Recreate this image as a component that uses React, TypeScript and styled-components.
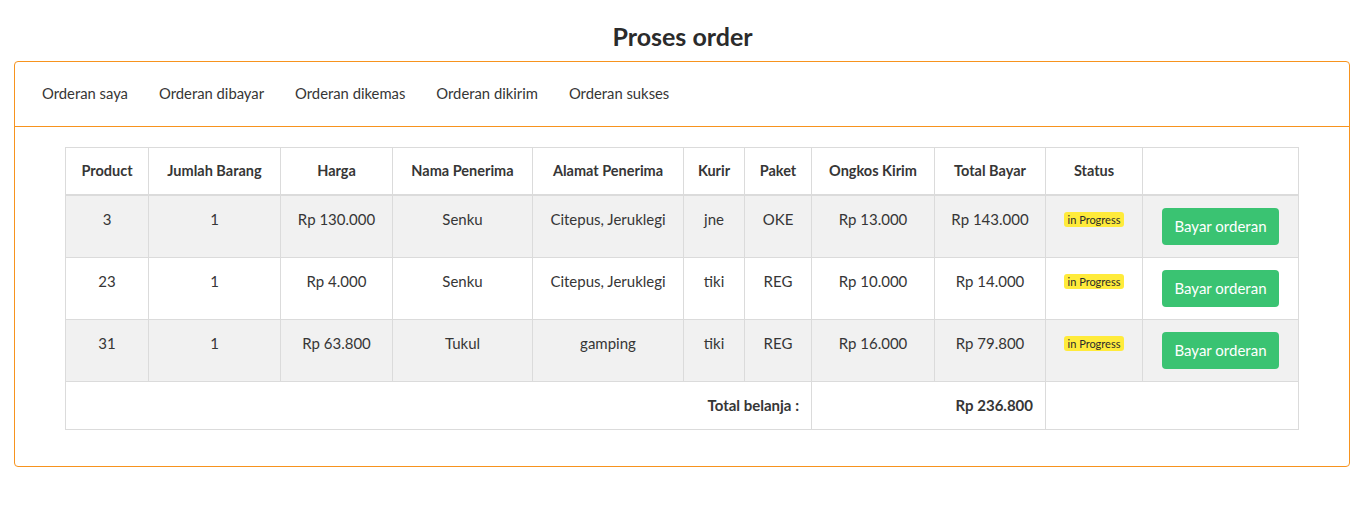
import React from 'react';
import styled, { createGlobalStyle } from 'styled-components';

const GlobalStyle = createGlobalStyle`
  html, body {
    margin: 0;
    padding: 0;
    background: #ffffff;
  }
  body {
    font-family: Lato, "Noto Sans", "Liberation Sans", sans-serif;
    color: #363636;
  }
`;

const Page = styled.div`
  padding: 20px 14px 0 14px;
`;

const Title = styled.h1`
  margin: 0 0 8px 0;
  text-align: center;
  font-size: 25px;
  font-weight: 700;
  line-height: 33px;
  color: #2b2b2b;
`;

const Card = styled.div`
  border: 1px solid #f7931e;
  border-radius: 4px;
  width: 1334px;
`;

const Tabs = styled.ul`
  display: flex;
  list-style: none;
  margin: 0;
  padding: 0 0 3px 11.5px;
  height: 61px;
  align-items: center;
  border-bottom: 1px solid #f7931e;
`;

const Tab = styled.li`
  padding: 0 15.5px;
  font-size: 14.8px;
  color: #363636;
  cursor: pointer;
`;

const Body = styled.div`
  padding: 20px 51px 36px 50px;
`;

const Table = styled.table`
  border-collapse: collapse;
  table-layout: fixed;
  width: 1233px;
  font-size: 15px;
  color: #363636;
`;

const Th = styled.th`
  border: 1px solid #dbdbdb;
  border-bottom-width: 2px;
  padding: 11px 6px 11px;
  line-height: 24px;
  font-weight: 700;
  font-size: 14.5px;
  text-align: center;
  vertical-align: top;
  color: #363636;
`;

const Row = styled.tr<{ $striped?: boolean }>`
  background: ${(p) => (p.$striped ? '#f1f1f1' : '#ffffff')};
`;

const Td = styled.td<{ $align?: string; $bold?: boolean }>`
  border: 1px solid #dbdbdb;
  padding: 11px 12px 12px;
  line-height: 24px;
  text-align: ${(p) => p.$align || 'center'};
  font-weight: ${(p) => (p.$bold ? 700 : 400)};
  vertical-align: top;
`;

const Tag = styled.span`
  display: inline-block;
  background: #ffeb3b;
  color: #2b2b2b;
  font-size: 11px;
  line-height: 15px;
  padding: 0 4px;
  border-radius: 3px;
  vertical-align: 1px;
`;

const Button = styled.button`
  display: block;
  margin: 0 auto;
  background: #3ac372;
  color: #ffffff;
  border: none;
  border-radius: 4px;
  font-family: inherit;
  font-size: 15px;
  height: 37px;
  width: 117px;
  padding: 0 0 2px;
  cursor: pointer;
`;

const BtnCell = styled(Td)`
  padding: 12px 0 12px;
`;

const colWidths = [83, 132, 112, 140, 151, 61, 67, 123, 111, 97, 156];
const headers = [
  'Product',
  'Jumlah Barang',
  'Harga',
  'Nama Penerima',
  'Alamat Penerima',
  'Kurir',
  'Paket',
  'Ongkos Kirim',
  'Total Bayar',
  'Status',
  '',
];

const orders = [
  { product: '3', qty: '1', harga: 'Rp 130.000', nama: 'Senku', alamat: 'Citepus, Jeruklegi', kurir: 'jne', paket: 'OKE', ongkir: 'Rp 13.000', total: 'Rp 143.000' },
  { product: '23', qty: '1', harga: 'Rp 4.000', nama: 'Senku', alamat: 'Citepus, Jeruklegi', kurir: 'tiki', paket: 'REG', ongkir: 'Rp 10.000', total: 'Rp 14.000' },
  { product: '31', qty: '1', harga: 'Rp 63.800', nama: 'Tukul', alamat: 'gamping', kurir: 'tiki', paket: 'REG', ongkir: 'Rp 16.000', total: 'Rp 79.800' },
];

const tabs = ['Orderan saya', 'Orderan dibayar', 'Orderan dikemas', 'Orderan dikirim', 'Orderan sukses'];

const App = () => {
  return (
    <>
      <GlobalStyle />
      <Page>
        <Title>Proses order</Title>
        <Card>
          <Tabs>
            {tabs.map((t) => (
              <Tab key={t}>{t}</Tab>
            ))}
          </Tabs>
          <Body>
            <Table>
              <colgroup>
                {colWidths.map((w, i) => (
                  <col key={i} style={{ width: w }} />
                ))}
              </colgroup>
              <thead>
                <tr>
                  {headers.map((h, i) => (
                    <Th key={i}>{h}</Th>
                  ))}
                </tr>
              </thead>
              <tbody>
                {orders.map((o, i) => (
                  <Row key={i} $striped={i % 2 === 0}>
                    <Td>{o.product}</Td>
                    <Td>{o.qty}</Td>
                    <Td>{o.harga}</Td>
                    <Td>{o.nama}</Td>
                    <Td>{o.alamat}</Td>
                    <Td>{o.kurir}</Td>
                    <Td>{o.paket}</Td>
                    <Td>{o.ongkir}</Td>
                    <Td>{o.total}</Td>
                    <Td>
                      <Tag>in Progress</Tag>
                    </Td>
                    <BtnCell>
                      <Button>Bayar orderan</Button>
                    </BtnCell>
                  </Row>
                ))}
                <Row>
                  <Td colSpan={7} $align="right" $bold>
                    Total belanja :
                  </Td>
                  <Td colSpan={2} $align="right" $bold>
                    Rp 236.800
                  </Td>
                  <Td colSpan={2}></Td>
                </Row>
              </tbody>
            </Table>
          </Body>
        </Card>
      </Page>
    </>
  );
};

export default App;
